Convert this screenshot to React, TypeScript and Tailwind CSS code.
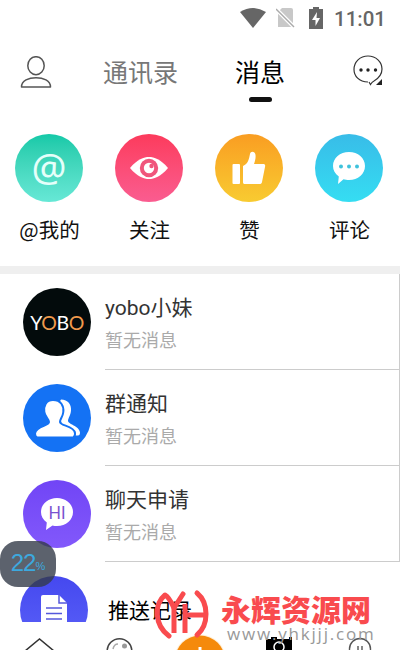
import React from 'react';

const shortcuts = [
  {
    label: '@我的',
    bg: 'bg-linear-to-b from-[#12c9a8] to-[#66e8d6]',
    icon: <span className="-mt-1.5 font-['Noto_Sans'] text-[39px] leading-none text-[#e5fffa]">@</span>,
  },
  {
    label: '关注',
    bg: 'bg-linear-to-b from-[#fc3a5c] to-[#fa5c90]',
    icon: (
      <svg viewBox="0 0 68 68" className="size-17">
        <path d="M15 34C22 25.500 29 23 34 23s12 2.500 19 11c-7 8.500-14 11-19 11s-12-2.500-19-11z" fill="#fff" />
        <circle cx="34" cy="34" r="9.200" fill="#f0567c" />
        <circle cx="34" cy="34" r="5.200" fill="#fff" />
        <circle cx="36.500" cy="32" r="2.200" fill="#f0567c" />
      </svg>
    ),
  },
  {
    label: '赞',
    bg: 'bg-linear-to-b from-[#f99d22] to-[#f8cb31]',
    icon: (
      <svg viewBox="0 0 68 68" className="size-17" fill="#fff">
        <rect x="17.500" y="30" width="7.500" height="20" rx="1" />
        <path d="M28 32c5-2 6-7 7-12 .5-3 5-3 5.500 1 .4 3-.5 6-1.500 9h9c2 0 2.500 1 2 3l-3 15c-.3 1.500-1 2-2.500 2H30c-1.500 0-2-.5-2-2z" />
      </svg>
    ),
  },
  {
    label: '评论',
    bg: 'bg-linear-to-b from-[#38bce8] to-[#35ddf2]',
    icon: (
      <svg viewBox="0 0 68 68" className="size-17">
        <path d="M34 18c9 0 16 6 16 14s-7 14-16 14c-2 0-4-.3-5.500-.8L23 50l.8-7.500C20 40 18 36 18 32c0-8 7-14 16-14z" fill="#fff" />
        <circle cx="26" cy="32.500" r="2" fill="#3fc2dc" />
        <circle cx="34" cy="32.500" r="2" fill="#3fc2dc" />
        <circle cx="42" cy="32.500" r="2" fill="#3fc2dc" />
      </svg>
    ),
  },
];

const chats = [
  {
    title: 'yobo小妹',
    bg: 'bg-[#030b0c]',
    icon: (
      <span className="mt-px font-['Lato'] text-[19.500px] leading-none tracking-[-0.4px] text-white">
        Y<span className="text-[#f09a4d]">O</span>B<span className="text-[#f09a4d]">O</span>
      </span>
    ),
  },
  {
    title: '群通知',
    bg: 'bg-[#1472f4]',
    icon: (
      <svg viewBox="0 0 68 68" className="size-17">
        <path
          d="M38 15.500c7 0 10.500 5 10 11-.4 5-2.500 7-3 10-.3 4 11.500 5 12 12q0 3-2 3H42L34 22z"
          fill="#fff"
        />
        <path
          d="M30 16c8 0 11 6 10.300 12-.5 5-3.300 7-3.300 10 0 4 14 3.500 15 11q.3 4-2 4.500H14q-2-1-2-4c1-7.500 14-7.500 14-11.500 0-3-4-5-4.700-10C20.500 22 23 16 30 16z"
          fill="#fff"
          stroke="#1472f4"
          strokeWidth="2"
        />
      </svg>
    ),
  },
  {
    title: '聊天申请',
    bg: 'bg-linear-to-b from-[#7145f6] to-[#8258fb]',
    icon: (
      <svg viewBox="0 0 68 68" className="size-17">
        <path d="M34 18c9 0 16 6 16 14s-7 14-16 14c-2 0-3-.2-4.500-.6L23 50l.8-7.500C20 40 18 36 18 32c0-8 7-14 16-14z" fill="#fff" />
        <text x="34" y="38.500" textAnchor="middle" fontSize="17" textLength="17" lengthAdjust="spacingAndGlyphs" fill="#7952cf" className="font-['Lato']">
          HI
        </text>
      </svg>
    ),
  },
];

const StatusBar: React.FC = () => (
  <div className="flex h-9 items-center justify-end pr-[14px] text-[#666]">
    <svg viewBox="0 0 26 20" className="mr-[10px] h-5 w-[26px]" fill="currentColor">
      <path d="M0 4Q13-4 26 4L13 20z" />
    </svg>
    <svg viewBox="0 0 20 20" className="mr-[13px] size-5">
      <path d="M6 0h9q2 0 2 2v17H2V4z" fill="#c8c8c8" />
      <path d="M0 1l18 18" stroke="#fff" strokeWidth="4" />
      <path d="M0 1l18 18" stroke="#aaa" strokeWidth="1.500" />
    </svg>
    <svg viewBox="0 0 14 22" className="mr-[11px] h-[22px] w-[14px]">
      <path d="M4 0h6v2h4v20H0V2h4z" fill="currentColor" />
      <path d="M8 5l-5 8h3.500v6L11 11H7.500z" fill="#fff" />
    </svg>
    <span className="mt-0.5 font-['Roboto'] text-[20.500px] font-medium">11:01</span>
  </div>
);

const Header: React.FC = () => (
  <header className="flex h-[74px] items-start">
    <svg viewBox="0 0 32 34" className="mt-5 ml-5 h-[34px] w-8" fill="none" stroke="#555" strokeWidth="1.500">
      <ellipse cx="16" cy="9.700" rx="8.200" ry="9" />
      <path d="M1.500 31c0-12.500 29-12.500 29 0z" strokeLinejoin="round" />
    </svg>
    <span className="mt-[17px] ml-[51px] text-[25px] leading-9 text-[#777]">通讯录</span>
    <div className="ml-[57px] flex flex-col items-center">
      <span className="mt-[17px] text-[25px] leading-9 text-black">消息</span>
      <span className="mt-2 h-[5px] w-[23px] rounded-full bg-[#111]" />
    </div>
    <svg viewBox="0 0 32 34" className="mt-[18px] ml-[66px] h-[34px] w-8" fill="none" stroke="#333" strokeWidth="1.200">
      <path d="M17 28C8 28 3 22 3 15.500 3 8 9 2 17 2s14 6 14 13c0 5-3 9-8 12q-2 1-3.500 3.500L18 28" />
      <g fill="#222" stroke="none">
        <circle cx="10" cy="16" r="1.700" />
        <circle cx="17" cy="16" r="1.700" />
        <circle cx="24.500" cy="16" r="1.700" />
        <path d="M31 25v6h-6z" />
      </g>
    </svg>
  </header>
);

const BottomNav: React.FC = () => (
  <nav className="relative grid h-7 grid-cols-5 justify-items-center overflow-hidden bg-white">
    <svg viewBox="0 0 40 28" className="h-7 w-10" fill="none" stroke="#333" strokeWidth="1.500">
      <path d="M5 29L19.500 17 34 29" />
    </svg>
    <svg viewBox="0 0 40 28" className="h-7 w-10" fill="none" stroke="#444" strokeWidth="1.500">
      <circle cx="19.500" cy="29" r="12.300" />
      <circle cx="24.500" cy="24" r="2.500" fill="#999" stroke="none" />
      <path d="M13 27q1-5 5-5" stroke="#aaa" />
    </svg>
    <svg viewBox="0 0 60 28" className="h-7 w-15">
      <circle cx="30" cy="38.500" r="26" fill="#fff0d8" />
      <circle cx="30" cy="38.500" r="25" fill="#f58a0b" />
      <path d="M30 25v6" stroke="#fff" strokeWidth="3" />
    </svg>
    <svg viewBox="0 0 40 28" className="h-7 w-10">
      <path d="M6 17h5v-2h6v2h12v-2h3v13H6z" fill="#000" />
      <circle cx="19" cy="25" r="5" fill="none" stroke="#fff" strokeWidth="1.500" />
    </svg>
    <svg viewBox="0 0 40 28" className="h-7 w-10" fill="none" stroke="#555" strokeWidth="1.400">
      <circle cx="20" cy="27" r="10.500" />
      <path d="M18 24v4M22 24v4" stroke="#888" strokeWidth="2" />
    </svg>
  </nav>
);

const App: React.FC = () => {
  return (
    <div className="relative flex h-[650px] w-[400px] flex-col overflow-hidden bg-white font-['Noto_Sans_CJK_SC','Noto_Sans',sans-serif]">
      <StatusBar />
      <Header />

      {/* Shortcuts */}
      <section className="grid h-39 grid-cols-4 pt-6">
        {shortcuts.map((s) => (
          <div key={s.label} className="flex w-[98px] flex-col items-center">
            <div className={`flex size-17 shrink-0 items-center justify-center rounded-full ${s.bg}`}>{s.icon}</div>
            <span className="mt-[11px] ml-px text-[20.500px] leading-8 whitespace-nowrap text-[#111]">{s.label}</span>
          </div>
        ))}
      </section>
      <div className="h-2 shrink-0 bg-[#efefef]" />

      {/* Conversations */}
      <section className="border-r border-[#ccc]">
        {chats.map((c) => (
          <div key={c.title} className="flex h-24 pl-[23px]">
            <div className={`mt-3.5 flex size-17 shrink-0 items-center justify-center rounded-full ${c.bg}`}>{c.icon}</div>
            <div className="ml-3.5 flex flex-1 flex-col border-b border-[#ccc] pt-[18px]">
              <span className="font-['Roboto','Noto_Sans_CJK_SC',sans-serif] text-[21px] leading-8 text-[#333]">{c.title}</span>
              <span className="text-[18px] leading-[30px] text-[#aaa]">暂无消息</span>
            </div>
          </div>
        ))}
      </section>
      <div className="flex h-15 items-start pl-5">
        <div className="mt-3.5 size-17 shrink-0 rounded-full bg-linear-to-b from-[#4548ef] to-[#5a60f8]">
          <svg viewBox="0 0 68 68" className="size-17">
            <path d="M23 19h16l8 8v28H21V21q0-2 2-2z" fill="#fff" />
            <path d="M39 19v8h8M26 32h16M26 37.500h16M26 43h16" fill="none" stroke="#5558dc" strokeWidth="1.500" />
          </svg>
        </div>
        <span className="mt-[31px] ml-5 text-[21px] leading-8 text-black">推送记录</span>
      </div>
      <BottomNav />

      {/* Floating battery level */}
      <div className="absolute top-[541px] left-0 flex h-[46px] w-14 items-center justify-center rounded-[18px] bg-[#333b48]/80 font-['Liberation_Sans'] text-[#3ca9df]">
        <span className="-mt-0.5 text-[24px] tracking-[-1px]">22</span>
        <span className="mt-1 text-[11px]">%</span>
      </div>

      {/* Site watermark */}
      <div className="absolute top-[585px] left-[152px] flex">
        <svg viewBox="0 0 62 65" className="h-[65px] w-[62px]" fill="none" stroke="#f94b4e" strokeWidth="5" strokeLinecap="round" strokeLinejoin="round">
          <path d="M17 51C2 40 2 19 13 10q4 2 9 13L31 9" />
          <path d="M22 23v25M33 19v29M33 30h19" strokeLinecap="butt" />
          <path d="M45 8c12 10 12 32 0 42" />
        </svg>
        <div className="ml-[7px] flex flex-col pt-[5px]">
          <span className="text-[30px] leading-[36px] font-black whitespace-nowrap text-[#f94b4e]">永辉资源网</span>
          <span className="ml-1.5 font-['Open_Sans'] text-[17px] leading-4 tracking-[1.800px] text-[#999]">www.yhkjjj.com</span>
        </div>
      </div>
    </div>
  );
};

export default App;
